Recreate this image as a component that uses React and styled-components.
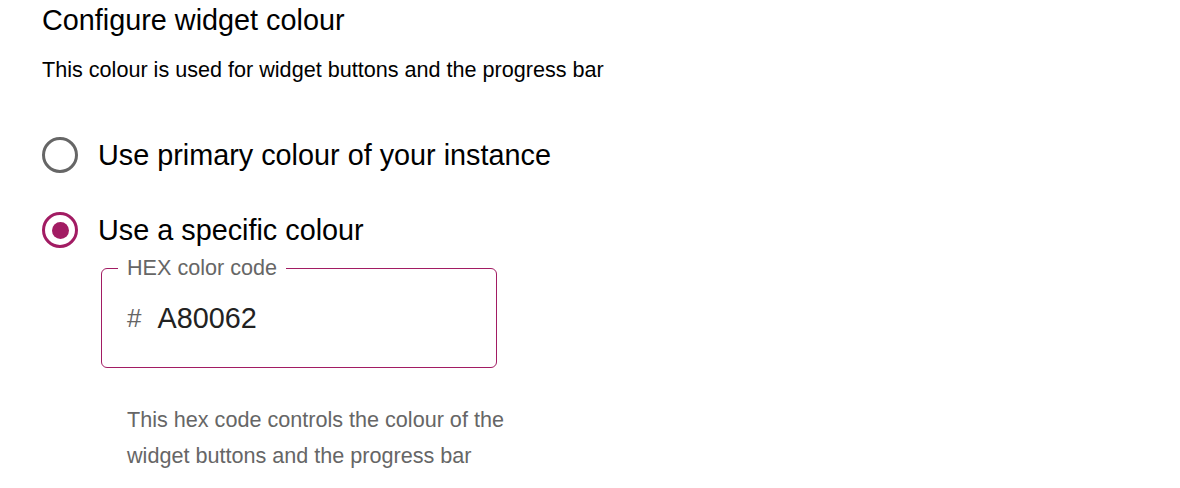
import React, { useState } from 'react';
import styled, { createGlobalStyle } from 'styled-components';

const GlobalStyle = createGlobalStyle`
  body {
    margin: 0;
    background: #fff;
    font-family: "Liberation Sans", Arial, Helvetica, sans-serif;
    color: #000;
  }
`;

const BRAND = '#A21C63';

const App = () => {
  const [choice, setChoice] = useState('specific');
  const [hex, setHex] = useState('A80062');

  return (
    <Page>
      <GlobalStyle />
      <Title>Configure widget colour</Title>
      <Subtitle>This colour is used for widget buttons and the progress bar</Subtitle>
      <Options>
        <Option onClick={() => setChoice('primary')}>
          <Radio checked={choice === 'primary'} />
          <OptionLabel>Use primary colour of your instance</OptionLabel>
        </Option>
        <Option onClick={() => setChoice('specific')}>
          <Radio checked={choice === 'specific'} />
          <OptionLabel>Use a specific colour</OptionLabel>
        </Option>
      </Options>
      <Field>
        <Legend>HEX color code</Legend>
        <Hash>#</Hash>
        <HexInput value={hex} onChange={(e) => setHex(e.target.value)} />
      </Field>
      <Helper>
        This hex code controls the colour of the
        <br />
        widget buttons and the progress bar
      </Helper>
    </Page>
  );
};

const Page = styled.div`
  padding: 0 42px;
  display: flex;
  flex-direction: column;
  align-items: flex-start;
`;

const Title = styled.h1`
  margin: 0;
  font-size: 28.8px;
  font-weight: 400;
  line-height: 40px;
`;

const Subtitle = styled.p`
  margin: 15px 0 0;
  font-size: 21.6px;
  line-height: 30px;
`;

const Options = styled.div`
  display: flex;
  flex-direction: column;
  gap: 39px;
  margin-top: 52px;
`;

const Option = styled.label`
  display: flex;
  align-items: center;
  gap: 20px;
  cursor: pointer;
`;

const Radio = styled.span`
  width: 36px;
  height: 36px;
  box-sizing: border-box;
  border-radius: 50%;
  border: 3px solid ${(p) => (p.checked ? BRAND : '#666')};
  display: flex;
  align-items: center;
  justify-content: center;
  &::after {
    content: '';
    width: 17px;
    height: 17px;
    border-radius: 50%;
    background: ${BRAND};
    display: ${(p) => (p.checked ? 'block' : 'none')};
  }
`;

const OptionLabel = styled.span`
  font-size: 28.8px;
  line-height: 36px;
`;

const Field = styled.div`
  position: relative;
  margin: 20px 0 0 59px;
  width: 396px;
  height: 100px;
  box-sizing: border-box;
  border: 1px solid ${BRAND};
  border-radius: 6px;
  padding: 0 25px;
  display: flex;
  align-items: center;
  gap: 16px;
`;

const Legend = styled.span`
  position: absolute;
  top: -13px;
  left: 16px;
  padding: 0 9px;
  background: #fff;
  font-size: 21.6px;
  line-height: 24px;
  color: #666;
`;

const Hash = styled.span`
  font-size: 26px;
  color: #666;
`;

const HexInput = styled.input`
  border: none;
  outline: none;
  font-family: inherit;
  font-size: 28.8px;
  color: #222;
  padding: 0;
  width: 220px;
  background: transparent;
`;

const Helper = styled.p`
  margin: 34px 0 0 85px;
  font-size: 21.6px;
  line-height: 36px;
  color: #666;
`;

export default App;
